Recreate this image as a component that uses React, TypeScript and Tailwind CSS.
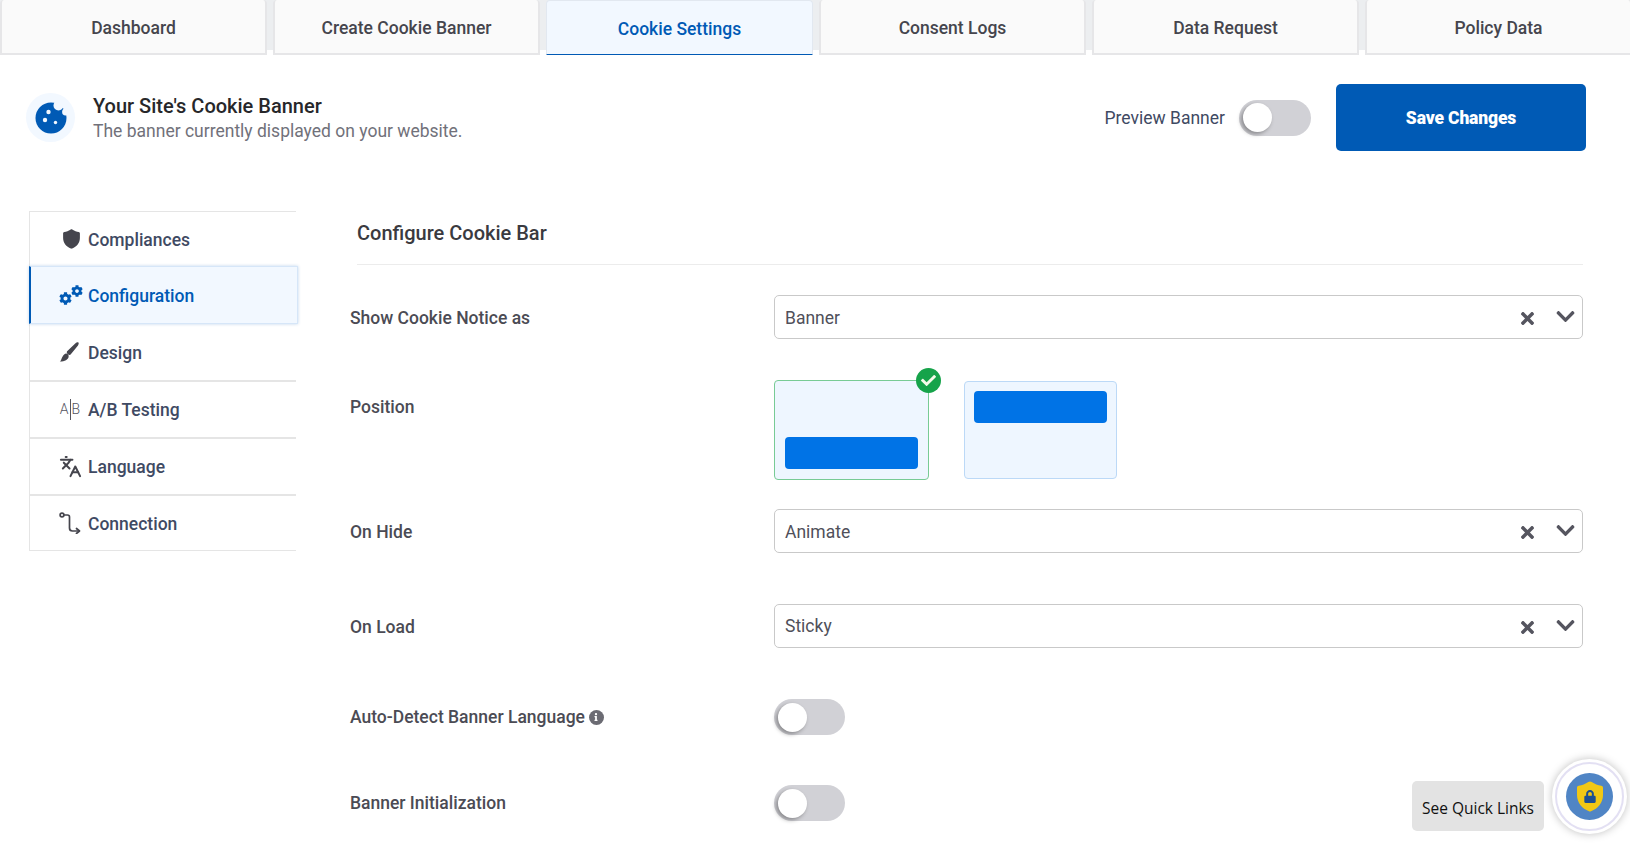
import React from "react";
import { FaLock, FaTimes, FaChevronDown, FaCheck, FaInfo, FaCog } from "react-icons/fa";
import { Languages } from "lucide-react";

const tabs = ["Dashboard", "Create Cookie Banner", "Cookie Settings", "Consent Logs", "Data Request", "Policy Data"];

function Toggle({ className = "w-[71px]" }: { className?: string }) {
  return (
    <div className={`h-[36px] rounded-full bg-[#d1d1d6] flex items-center pl-[4px] ${className}`}>
      <div className="w-[29px] h-[29px] rounded-full bg-white shadow-[-2px_2px_4px_rgba(0,0,0,0.35)]" />
    </div>
  );
}

function Select({ value, textClass = "" }: { value: string; textClass?: string }) {
  return (
    <div className="w-[809px] h-[44px] rounded-[5px] border border-[#c9c9c9] bg-white flex items-center pl-[10px] pr-[6px] text-[17.5px] text-[#50505a]">
      <span className={`flex-1 ${textClass}`}>{value}</span>
      <FaTimes className="text-[#55555f] w-[19px] h-[19px] mt-[2px] mr-[18px]" />
      <FaChevronDown className="text-[#55555f] w-[21px] h-[21px] -mt-[1px]" />
    </div>
  );
}

function Label({ children, className = "" }: { children: React.ReactNode; className?: string }) {
  return <div className={`w-[424px] shrink-0 text-[17.5px] font-medium text-[#4b4b54] ${className}`}>{children}</div>;
}

function ShieldShape({ className = "" }: { className?: string }) {
  return (
    <svg viewBox="0 0 26 31" className={className} fill="currentColor">
      <path d="M13 0.5C12.4 0.5 11.8 0.7 11.3 1.1C8.5 3 5 4.4 1.8 4.8C0.8 4.9 0 5.7 0 6.7V14C0 21.5 5 27.5 12 30.3C12.6 30.6 13.4 30.6 14 30.3C21 27.5 26 21.5 26 14V6.7C26 5.7 25.2 4.9 24.2 4.8C21 4.4 17.5 3 14.7 1.1C14.2 0.7 13.6 0.5 13 0.5Z" />
    </svg>
  );
}

function BrushIcon() {
  return (
    <svg width="20" height="20" viewBox="0 0 20 20" fill="#45454d">
      <path d="M19.4 0.6C20 1.2 19.7 2.5 19 3.4L11.6 12.6C11 13.2 9.6 13 8.6 12C7.7 11.1 7.5 10 8.1 9.2L16.5 1.2C17.5 0.3 18.8 0 19.4 0.6Z" />
      <path d="M6.8 11.4C8.6 11.2 10.2 12.8 9.6 15C9 17.6 6 19.6 0.8 19.6C3 18 2.6 13 6.8 11.4Z" />
    </svg>
  );
}

function CookieIcon() {
  return (
    <svg width="32" height="32" viewBox="0 0 32 32">
      <circle cx="16" cy="16" r="15.5" fill="#005ab5" />
      <circle cx="23.5" cy="3.5" r="5" fill="#f2f8ff" />
      <circle cx="30.5" cy="10" r="3.4" fill="#f2f8ff" />
      <circle cx="13.5" cy="10" r="2.2" fill="#f2f8ff" />
      <circle cx="10" cy="18" r="2.2" fill="#f2f8ff" />
      <circle cx="20.5" cy="20.5" r="1.7" fill="#f2f8ff" />
    </svg>
  );
}

function AbIcon() {
  return (
    <span className="w-[22px] ml-[1px] h-[22px] -mt-[1px] flex items-center justify-center text-[14px] leading-none text-[#55555f] font-light">
      <span className="shrink-0">A</span>
      <span className="shrink-0 w-px h-[21px] bg-[#55555f] mx-[1px]" />
      <span className="shrink-0">B</span>
    </span>
  );
}

function RouteIcon() {
  return (
    <svg width="22" height="22" viewBox="0 0 22 22" fill="none" stroke="#45454d" strokeWidth="1.7" strokeLinecap="round" strokeLinejoin="round">
      <circle cx="3" cy="3" r="1.9" />
      <path d="M5 3h3.5a2 2 0 0 1 2 2v11a3 3 0 0 0 3 3H20" />
      <path d="M17.5 16.5 20.5 19l-3 2.5" />
    </svg>
  );
}

function GearsIcon() {
  return (
    <span className="relative block w-[24px] h-[20px] text-[#005ab5]">
      <FaCog className="absolute left-0 bottom-0 w-[13px] h-[13px]" />
      <FaCog className="absolute right-0 top-0 w-[12px] h-[12px]" />
    </span>
  );
}

const side: { label: string; icon: React.ReactNode; cls: string }[] = [
  { label: "Compliances", icon: <ShieldShape className="w-[17px] h-[20px] ml-[5px] text-[#45454d]" />, cls: "h-[55px] border-t border-[#e5e5e5]" },
  { label: "Configuration", icon: <GearsIcon />, cls: "" },
  { label: "Design", icon: <span className="ml-[1px] flex"><BrushIcon /></span>, cls: "h-[56px]" },
  { label: "A/B Testing", icon: <AbIcon />, cls: "h-[57px] border-t-2 border-[#e5e5e5]" },
  { label: "Language", icon: <Languages className="w-[23px] h-[23px] ml-[1px] text-[#45454d]" strokeWidth={2.1} />, cls: "h-[57px] border-t-2 border-[#e5e5e5]" },
  { label: "Connection", icon: <span className="ml-[1px] flex"><RouteIcon /></span>, cls: "h-[57px] border-t-2 border-b border-[#e5e5e5]" },
];

export default function App() {
  return (
    <div className="h-screen overflow-hidden bg-white font-['Roboto',sans-serif] relative">
      <div className="h-[55px]">
        <div className="h-[50px] bg-[#eceef0] grid grid-cols-[repeat(6,267px)] gap-[6px] items-start">
          {tabs.map((t, i) => (
            <div
              key={t}
              className={`h-[55px] pt-[3px] rounded-t-[4px] flex items-center justify-center text-[17.5px] font-medium ${
                i === 2
                  ? "bg-[#f2f8ff] border border-[#e2e8f0] border-b-[#005ab5] text-[#005ab5]"
                  : "bg-[#fafafa] border-x-2 border-b-2 border-[#e6e6e8] text-[#45454d]"
              }`}
            >
              {t}
            </div>
          ))}
        </div>
      </div>

      <div className="flex items-center justify-between mt-[29px] pl-[26px] pr-[44px]">
        <div className="flex items-center gap-[18px]">
          <div className="w-[49px] h-[49px] rounded-full bg-[#f2f8ff] flex items-center justify-center">
            <CookieIcon />
          </div>
          <div>
            <div className="text-[20px] leading-[26px] font-medium text-[#27272a]">Your Site's Cookie Banner</div>
            <div className="text-[17.5px] leading-[24px] text-[#71717a]">The banner currently displayed on your website.</div>
          </div>
        </div>
        <div className="flex items-center">
          <span className="text-[17.5px] pt-[2px] text-[#3f4a63] mr-[14px]">Preview Banner</span>
          <Toggle className="w-[72px] mr-[25px]" />
          <button className="w-[250px] h-[67px] pt-[2px] rounded-[5px] bg-[#005ab5] text-white text-[17.5px] font-black tracking-[-0.15px]">Save Changes</button>
        </div>
      </div>

      <div className="flex mt-[60px]">
        <div className="ml-[29px] w-[267px] shrink-0">
          <div className="border-l border-[#e5e5e5]">
            {side.map((s, i) =>
              i === 1 ? (
                <div
                  key={s.label}
                  className="-ml-[1px] mr-[-2px] h-[58px] flex items-center bg-[#f2f8ff] border border-[#d6e6f8] border-l-2 border-l-[#005ab5] shadow-[0_0_3px_rgba(0,90,181,0.25)] text-[#005ab5] text-[17.5px] font-medium"
                >
                  <span className="w-[57px] pl-[28px] flex">{s.icon}</span>
                  <span className="pt-[2px]">{s.label}</span>
                </div>
              ) : (
                <div key={s.label} className={`flex items-center text-[17.5px] font-medium text-[#3f4a63] ${s.cls}`}>
                  <span className="w-[58px] h-[24px] pl-[28px] flex items-center">{s.icon}</span>
                  <span className="pt-[2px]">{s.label}</span>
                </div>
              )
            )}
          </div>
        </div>

        <div className="ml-[54px] flex-1 pr-[47px]">
          <div className="ml-[7px] h-[54px] border-b border-[#ececec] text-[20px] font-medium text-[#3a3a40] leading-[44px]">
            Configure Cookie Bar
          </div>

          <div className="flex items-center mt-[30px]">
            <Label className="pt-[2px]">Show Cookie Notice as</Label>
            <Select value="Banner" textClass="pt-[2px]" />
          </div>

          <div className="flex mt-[41px]">
            <Label className="pt-[14px]">Position</Label>
            <div className="flex gap-[35px]">
              <div className="relative w-[155px] h-[100px] rounded-[4px] bg-[#eef6ff] border-[1.5px] border-[#78cb95] flex items-end px-[10px] pb-[10px]">
                <div className="w-full h-[32px] rounded-[4px] bg-[#0073e6]" />
                <div className="absolute -top-[13px] -right-[13px] w-[25px] h-[25px] rounded-full bg-[#16a34a] flex items-center justify-center">
                  <FaCheck className="w-[15px] h-[15px] text-[#f4fbe9]" />
                </div>
              </div>
              <div className="w-[153px] h-[98px] mt-[1px] rounded-[4px] bg-[#eef6ff] border-[1.5px] border-[#bcd9f7] px-[9px] pt-[9px]">
                <div className="w-full h-[32px] rounded-[4px] bg-[#0073e6]" />
              </div>
            </div>
          </div>

          <div className="flex items-center mt-[29px]">
            <Label className="pt-[2px]">On Hide</Label>
            <Select value="Animate" textClass="pt-[2px]" />
          </div>

          <div className="flex items-center mt-[51px]">
            <Label className="pt-[2px]">On Load</Label>
            <Select value="Sticky" />
          </div>

          <div className="flex items-center mt-[51px]">
            <Label className="flex items-center gap-[4px]">
              Auto-Detect Banner Language
              <span className="w-[15px] h-[15px] rounded-full bg-[#6b6b73] flex items-center justify-center">
                <FaInfo className="w-[8px] h-[8px] text-white" />
              </span>
            </Label>
            <Toggle />
          </div>

          <div className="flex items-center mt-[50px]">
            <Label>Banner Initialization</Label>
            <Toggle />
          </div>
        </div>
      </div>

      <div className="absolute left-[1412px] top-[781px] w-[132px] h-[50px] pt-[5px] rounded-[5px] bg-[#e3e3e3] flex items-center justify-center text-[15.5px] text-[#111] font-['Open_Sans',sans-serif]">
        See Quick Links
      </div>
      <div className="absolute left-[1552px] top-[759px] w-[75px] h-[75px] rounded-full bg-white shadow-[0_0_8px_rgba(0,0,0,0.25)] flex items-center justify-center">
        <div className="w-[69px] h-[69px] rounded-full border-2 border-[#e3e0f3] flex items-center justify-center">
          <div className="relative w-[47px] h-[47px] rounded-full bg-[#5085c5] flex items-center justify-center">
            <ShieldShape className="w-[26px] h-[31px] text-[#f2c814]" />
            <FaLock className="absolute w-[12px] h-[13px] text-[#1d4f91]" />
          </div>
        </div>
      </div>
    </div>
  );
}
